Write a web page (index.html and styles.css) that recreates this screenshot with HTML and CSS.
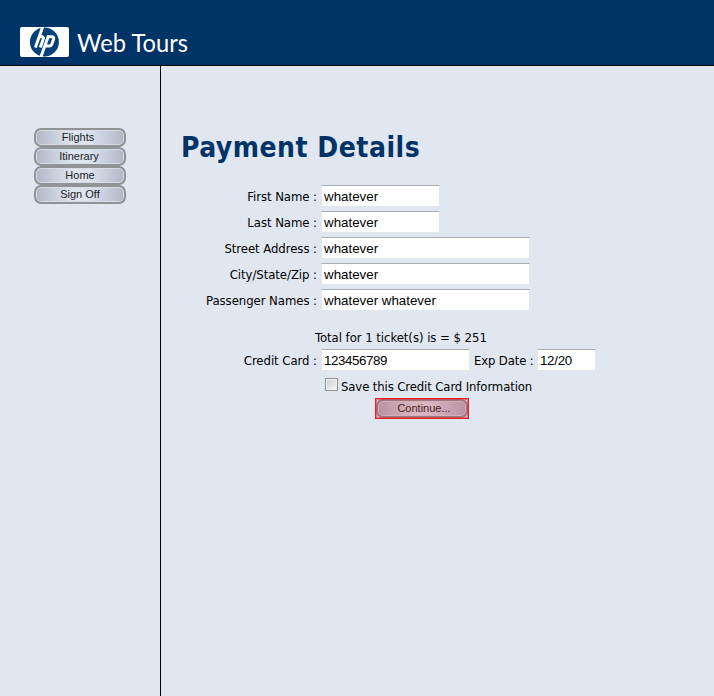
FILE: index.html
```html
<!DOCTYPE html>
<html lang="en">
<head>
<meta charset="utf-8">
<title>Web Tours</title>
<link rel="stylesheet" href="styles.css">
</head>
<body>
<header class="banner">
  <svg class="logo" width="49" height="30" viewBox="0 0 49 30" role="img" aria-label="hp">
    <rect width="49" height="30" rx="2" fill="#fff"/>
    <circle cx="24.4" cy="15" r="14.5" fill="#044178"/>
    <g fill="none" stroke="#fff" stroke-width="3">
      <path d="M23 -1 15.4 20.5M19 9.8H21.8Q24 9.8 23.2 12.3L20.3 20.5"/>
      <path d="M28.6 8.4 20.5 31M27.9 9.8H31.9Q34.4 9.8 33.5 12.4L31.9 17Q31.2 19 29 19H25.2"/>
    </g>
  </svg>
  <svg class="brand" width="114" height="32"><text x="0" y="25" textLength="111" lengthAdjust="spacingAndGlyphs">Web Tours</text></svg>
</header>
<div class="content">
  <nav class="menu">
    <a class="pill flights">Flights</a>
    <a class="pill itinerary">Itinerary</a>
    <a class="pill">Home</a>
    <a class="pill">Sign Off</a>
  </nav>
  <main class="payment">
    <h1>Payment Details</h1>
    <form>
      <div class="row"><label for="first">First Name :</label><input id="first" class="short" value="whatever"></div>
      <div class="row"><label for="last">Last Name :</label><input id="last" class="short" value="whatever"></div>
      <div class="row"><label for="street">Street Address :</label><input id="street" class="long" value="whatever"></div>
      <div class="row"><label for="city">City/State/Zip :</label><input id="city" class="long" value="whatever"></div>
      <div class="row"><label for="names">Passenger Names :</label><input id="names" class="long" value="whatever whatever"></div>
      <p class="total">Total for 1 ticket(s) is = $ 251</p>
      <div class="row"><label for="card">Credit Card :</label><input id="card" class="card" value="123456789"><label class="exp" for="exp">Exp Date :</label><input id="exp" class="date" value="12/20"></div>
      <div class="save"><input id="save" type="checkbox"><label for="save">Save this Credit Card Information</label></div>
      <div class="highlight"><button type="button" class="pill">Continue...</button></div>
    </form>
  </main>
</div>
</body>
</html>
```
FILE: styles.css
```css
* { box-sizing: border-box; }
body {
  margin: 0;
  height: 696px;
  overflow: hidden;
  display: flex;
  flex-direction: column;
  background: #e0e7f1;
  color: #000;
  font: 13px/16px "DejaVu Sans Condensed", "DejaVu Sans", sans-serif;
  font-stretch: condensed;
}
.banner {
  height: 66px;
  display: flex;
  align-items: flex-start;
  padding: 27px 0 0 20px;
  background: #003366;
  border-bottom: 1px solid #000;
}
.brand { margin-left: 8px; overflow: visible; }
.brand text { font: 24.5px Lato, sans-serif; fill: #fff; }
.content { display: flex; flex: 1; }
.menu {
  width: 161px;
  padding: 62px 0 0 34px;
  border-right: 1px solid #000;
}
.pill {
  display: block;
  width: 92px;
  height: 19px;
  padding: 0;
  border: 2px solid #929399;
  border-radius: 7px;
  box-shadow: inset 0 0 0 1px #d8dce6;
  background: linear-gradient(90deg, #b2b7c6, #e0e7f1 43%, #dce3ee 60%, #b2b7c6);
  color: #202124;
  font: 11px/14px "Liberation Sans", Arial, sans-serif;
  text-align: center;
}
.flights { padding-right: 4px; }
.itinerary { padding-right: 2px; }
.payment { padding: 63px 0 0 21px; }
h1 {
  margin: 0 0 18px -1px;
  height: 38px;
  color: #003366;
  font: bold 28px/38px "DejaVu Sans Condensed", "DejaVu Sans", sans-serif;
  font-stretch: condensed;
  letter-spacing: .5px;
  white-space: nowrap;
}
.row { display: flex; height: 22px; margin-bottom: 4px; }
.row label { width: 139px; padding-top: 4px; padding-right: 4px; text-align: right; white-space: nowrap; letter-spacing: -.05px; }
.row input {
  height: 22px;
  padding: 0 2px;
  border: 1px solid #e2e5eb;
  border-top-color: #abadb3;
  border-radius: 1px;
  background: #fff;
  color: #000;
  font: 13.33px "Liberation Sans", Arial, sans-serif;
}
.row .short { width: 119px; }
.row .long { width: 209px; }
.row .card { width: 149px; letter-spacing: -.4px; }
.row .date { width: 59px; letter-spacing: -.3px; }
.row .exp { width: 67px; padding-left: 4px; text-align: left; letter-spacing: -.15px; }
.total { margin: 19px 0 3px 133px; white-space: nowrap; letter-spacing: -.04px; }
.save { display: flex; height: 20px; margin: 7px 0 0 143px; }
.save input {
  appearance: none;
  width: 13px;
  height: 13px;
  margin: 0 3px 0 0;
  border: 1px solid #8e8f8f;
  background: linear-gradient(135deg, #cbcfd5, #f6f6f6);
  box-shadow: inset 0 0 0 1px #f4f4f4;
}
.save label { white-space: nowrap; padding-top: 1px; letter-spacing: -.12px; }
.highlight {
  position: relative;
  width: 94px;
  height: 21px;
  margin: 0 0 0 193px;
  padding: 1px;
}
.highlight::after {
  content: "";
  position: absolute;
  inset: 0;
  border: 1px solid #ed1c24;
  background: rgba(205, 30, 45, .24);
  box-shadow: inset 0 0 0 1px rgba(237, 28, 36, .4);
}
.highlight .pill { padding: 0 0 1px 4px; line-height: 13px; }
```
